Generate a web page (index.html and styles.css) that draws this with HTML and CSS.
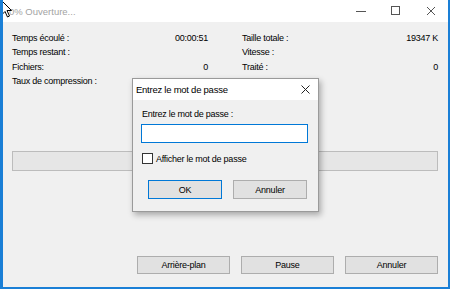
FILE: index.html
```html
<!DOCTYPE html>
<html lang="fr">
<head>
    <meta charset="UTF-8">
    <title>Ouverture</title>
    <link rel="stylesheet" href="styles.css">
</head>
<body>
<div class="window">
    <div class="titlebar">
        <span class="title">0% Ouverture...</span>
        <div class="controls">
            <span class="ctl"><svg width="10" height="10" viewBox="0 0 10 10"><path d="M0 5.5H10" stroke="#555" stroke-width="1"/></svg></span>
            <span class="ctl"><svg width="10" height="10" viewBox="0 0 10 10"><rect x="0.5" y="0.5" width="8" height="8" fill="none" stroke="#555" stroke-width="1"/></svg></span>
            <span class="ctl"><svg width="10" height="10" viewBox="0 0 10 10"><path d="M1 1L9 9M9 1L1 9" stroke="#555" stroke-width="1"/></svg></span>
        </div>
    </div>

    <div class="content">
        <div class="stats">
            <div class="col">
                <div class="row"><span>Temps écoulé :</span><span>00:00:51</span></div>
                <div class="row"><span>Temps restant :</span><span></span></div>
                <div class="row"><span>Fichiers:</span><span>0</span></div>
                <div class="row"><span>Taux de compression :</span><span></span></div>
            </div>
            <div class="col">
                <div class="row"><span>Taille totale :</span><span>19347 K</span></div>
                <div class="row"><span>Vitesse :</span><span></span></div>
                <div class="row"><span>Traité :</span><span>0</span></div>
            </div>
        </div>

        <div class="progress"></div>

        <div class="actions">
            <button class="btn">Arrière-plan</button>
            <button class="btn">Pause</button>
            <button class="btn">Annuler</button>
        </div>
    </div>

    <div class="dialog">
        <div class="dialog-title">
            <span>Entrez le mot de passe</span>
            <svg width="9" height="9" viewBox="0 0 9 9"><path d="M0.5 0.5L8.5 8.5M8.5 0.5L0.5 8.5" stroke="#222" stroke-width="1"/></svg>
        </div>
        <div class="dialog-body">
            <div class="label">Entrez le mot de passe :</div>
            <div class="field"></div>
            <div class="check"><span class="box"></span><span>Afficher le mot de passe</span></div>
            <div class="dialog-actions">
                <button class="btn ok">OK</button>
                <button class="btn">Annuler</button>
            </div>
        </div>
    </div>

    <svg class="cursor" width="12" height="18" viewBox="0 0 12 18">
        <path d="M0.5 0.5V15L4 11.5L6.5 17L8.5 16L6 10.5H10.5Z" fill="#fff" stroke="#000" stroke-width="1" stroke-linejoin="round"/>
    </svg>
</div>
</body>
</html>
```

FILE: styles.css
```css
body {
    margin: 0;
    font-family: "Liberation Sans", Arial, sans-serif;
    font-size: 9px;
    letter-spacing: -0.25px;
    color: #000;
}

.window {
    position: relative;
    width: 450px;
    height: 289px;
    box-sizing: border-box;
    border-left: 3px solid #1a7fd6;
    border-right: 2px solid #1a7fd6;
    border-bottom: 2px solid #1a7fd6;
    display: flex;
    flex-direction: column;
    overflow: hidden;
}

.titlebar {
    height: 22px;
    background-color: white;
    display: flex;
    align-items: center;
}

.title {
    padding-left: 6px;
    color: #a3a3a3;
    font-size: 9.5px;
    letter-spacing: 0;
}

.controls {
    margin-left: auto;
    display: flex;
}

.ctl {
    width: 35px;
    height: 22px;
    display: flex;
    align-items: center;
    justify-content: center;
}

.content {
    flex: 1;
    background-color: #f0f0f0;
    padding: 9px 10px 13px 9px;
    display: flex;
    flex-direction: column;
}

.stats {
    display: grid;
    grid-template-columns: 196px 196px;
    column-gap: 34px;
    height: 58px;
}

.row {
    display: flex;
    justify-content: space-between;
    height: 14.4px;
    line-height: 14.4px;
    white-space: nowrap;
}

.progress {
    margin-top: 62px;
    height: 18px;
    border: 1px solid #bcbcbc;
    background-color: #e6e6e6;
}

.actions {
    margin-top: auto;
    display: flex;
    justify-content: flex-end;
    gap: 11px;
}

.btn {
    font-family: inherit;
    font-size: 9px;
    letter-spacing: -0.25px;
    color: #000;
    width: 93px;
    height: 18px;
    padding: 0;
    background-color: #e1e1e1;
    border: 1px solid #adadad;
}

.dialog {
    position: absolute;
    left: 129px;
    top: 78px;
    width: 187px;
    height: 134px;
    box-sizing: border-box;
    border: 1px solid #9a9a9a;
    background-color: #f0f0f0;
    box-shadow: 2px 3px 6px rgba(0, 0, 0, 0.3);
    display: flex;
    flex-direction: column;
}

.dialog-title {
    height: 21px;
    background-color: white;
    display: flex;
    align-items: center;
    justify-content: space-between;
    padding: 0 8px 0 3px;
    font-size: 9.5px;
}

.dialog-body {
    padding: 7px 10px 0 9px;
}

.label {
    height: 14px;
    line-height: 14px;
}

.field {
    margin-top: 3px;
    height: 17px;
    border: 1px solid #0078d7;
    background-color: white;
    margin-left: -1px;
}

.check {
    margin-top: 10px;
    display: flex;
    align-items: center;
    gap: 3px;
}

.box {
    width: 9px;
    height: 9px;
    border: 1px solid #333;
    background-color: white;
}

.dialog-actions {
    margin-top: 16px;
    display: flex;
    gap: 11px;
    padding-left: 6px;
}

.dialog-actions .btn {
    width: 74px;
    height: 19px;
}

.btn.ok {
    border-color: #0078d7;
}

.cursor {
    position: absolute;
    left: -2px;
    top: 0;
}
```
